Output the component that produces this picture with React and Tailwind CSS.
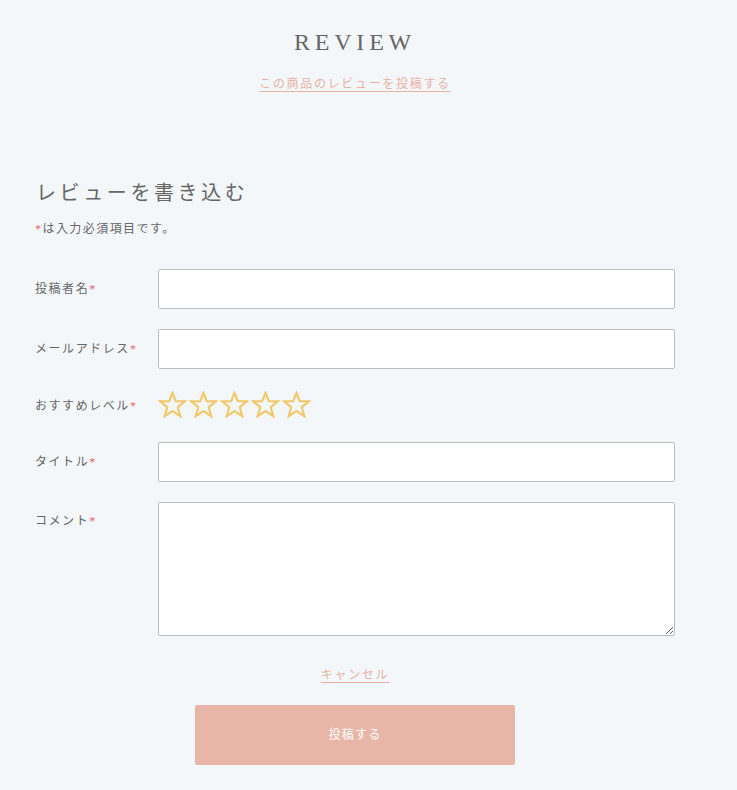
import React from "react";

const serif = { fontFamily: '"Liberation Serif", "Noto Sans CJK JP", serif' };

function Star() {
  return (
    <svg width="29" height="27" viewBox="0 0 29 27" className="block">
      <polygon
        points="14.5,1.8 17.8,10.2 26.8,10.4 19.8,16.2 22.3,25.2 14.5,20.1 6.7,25.2 9.2,16.2 2.2,10.4 11.2,10.2"
        fill="none"
        stroke="#f2c86c"
        strokeWidth="2.2"
        strokeLinejoin="miter"
      />
    </svg>
  );
}

function Label({ children }) {
  return (
    <div className="w-[123px] shrink-0 text-[12px] tracking-[0.13em] text-[#666]">
      {children}
      <span className="text-[#e8606a]">*</span>
    </div>
  );
}

function Field({ label }) {
  return (
    <div className="flex items-center">
      <Label>{label}</Label>
      <input
        type="text"
        className="h-[40px] w-[517px] rounded-[2px] border border-[#bdbdbd] bg-white outline-none"
      />
    </div>
  );
}

export default function App() {
  return (
    <div className="min-h-[790px] w-full bg-[#f4f7fa]" style={serif}>
      <div className="ml-[35px] w-[640px] pt-[24px] pb-[25px]">
        <h2 className="text-center text-[24px] leading-[36px] tracking-[0.2em] text-[#666]">
          REVIEW
        </h2>
        <div className="mt-[11px] text-center">
          <a className="text-[12px] leading-[18px] tracking-[0.14em] text-[#e8b2a2] underline underline-offset-[3px] decoration-[#e8b2a2]">
            この商品のレビューを投稿する
          </a>
        </div>

        <h3 className="mt-[83px] pl-[1px] text-[20px] leading-[30px] tracking-[0.18em] text-[#666]">
          レビューを書き込む
        </h3>
        <p className="mt-[12px] text-[12px] leading-[18px] tracking-[0.12em] text-[#666]">
          <span className="text-[#e8606a]">*</span>は入力必須項目です。
        </p>

        <div className="mt-[31px] flex flex-col gap-[20px]">
          <Field label="投稿者名" />
          <Field label="メールアドレス" />
          <div className="flex h-[33px] items-center">
            <Label>おすすめレベル</Label>
            <div className="flex gap-[2px] -mt-[3px]">
              <Star />
              <Star />
              <Star />
              <Star />
              <Star />
            </div>
          </div>
          <Field label="タイトル" />
          <div className="flex items-start">
            <div className="pt-[10px]">
              <Label>コメント</Label>
            </div>
            <textarea className="h-[134px] w-[517px] rounded-[2px] border border-[#bdbdbd] bg-white outline-none" />
          </div>
        </div>

        <div className="mt-[26px] text-center">
          <a className="text-[12px] leading-[18px] tracking-[0.14em] text-[#e8b2a2] underline underline-offset-[3px] decoration-[#e8b2a2]">
            キャンセル
          </a>
        </div>
        <div className="mt-[19px] flex justify-center">
          <button className="h-[60px] w-[320px] rounded-[2px] bg-[#e8b6a6] text-[12px] tracking-[0.1em] text-white">
            投稿する
          </button>
        </div>
      </div>
    </div>
  );
}
